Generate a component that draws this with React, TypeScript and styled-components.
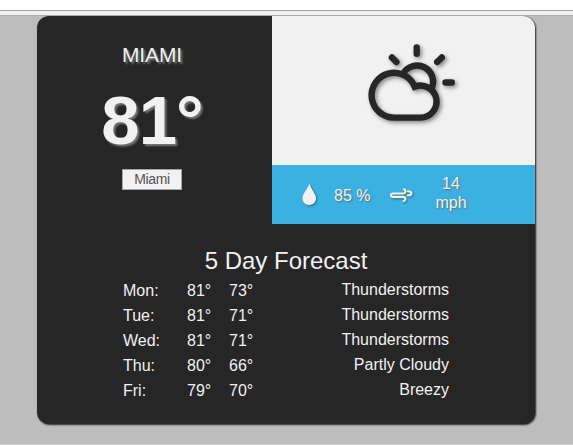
import React from "react";
import styled, { createGlobalStyle } from "styled-components";

const light = "#f1f1f1";
const dark = "#262626";

const GlobalStyle = createGlobalStyle`
  * { box-sizing: border-box; }
  html, body { margin: 0; padding: 0; }
  body {
    background: #bdbdbd;
    color: ${light};
    font-family: "Liberation Sans", Arial, sans-serif;
    font-size: 16px;
    overflow: hidden;
  }
`;

const Page = styled.div`
  height: 445px;
  border-bottom: 1px solid #d4d4d4;
`;

const TopStrip = styled.div`
  height: 11px;
  background: #fff;
  border-bottom: 1px solid #a0a0a0;
`;

const ToolStrip = styled.div`
  height: 5px;
  background: #f1f1f1;
  border-bottom: 1px solid #aeb0ae;
`;

const Card = styled.main`
  width: 498px;
  height: 408px;
  margin-left: 37px;
  background: ${dark};
  border-radius: 12px;
  box-shadow: 1px 1px 2px #262020;
`;

const Current = styled.section`
  display: grid;
  grid-template-columns: 235px 263px;
  height: 208px;
  border-radius: 12px 12px 0 0;
  overflow: hidden;
`;

const Place = styled.div`
  display: flex;
  flex-direction: column;
  align-items: center;
  padding: 27px 5px 0 0;
`;

const City = styled.h1`
  margin: 0;
  font-size: 20.8px;
  line-height: 24px;
  font-weight: 400;
  text-shadow: 2px 2px 2px #777;
`;

const Temperature = styled.div`
  margin-top: 14px;
  font-size: 69px;
  line-height: 80px;
  font-weight: 700;
  letter-spacing: -1px;
  text-shadow: 2px 2px 2px #777;
`;

const CityButton = styled.button`
  width: 60px;
  height: 21px;
  margin-top: 8px;
  padding: 0;
  border: 1px solid #a6a6a6;
  background: ${light};
  color: #555;
  font: 14px/19px "Liberation Sans", Arial, sans-serif;
  letter-spacing: -0.4px;
`;

const Conditions = styled.div`
  display: grid;
  grid-template-rows: 149px 59px;
`;

const Sky = styled.div`
  display: flex;
  padding: 24px 0 0 88px;
  background: ${light};
`;

const Stats = styled.div`
  display: grid;
  grid-template-columns: 28px 66px 24px 74px;
  align-items: center;
  padding-left: 24px;
  background: #3bb1e2;
  text-shadow: 1px 1px 2px #666;
`;

const Humidity = styled.span`
  padding: 3px 0 0 10px;
  white-space: nowrap;
`;

const WindSpeed = styled.span`
  width: 44px;
  margin-left: 15px;
  padding-bottom: 4px;
  line-height: 19px;
  text-align: center;
`;

const Icon = styled.svg`
  display: block;
  overflow: visible;
  fill: none;
  stroke-linecap: round;
`;

const SkyIcon = styled(Icon)`
  stroke: ${dark};
  stroke-width: 6.4;
  filter: drop-shadow(2px 2px 2px rgba(0, 0, 0, 0.45));
`;

const StatIcon = styled(Icon)`
  filter: drop-shadow(1px 1px 1px rgba(50, 50, 50, 0.6));
`;

const DropIcon = styled(StatIcon)`
  margin-bottom: 2px;
`;

const WindIcon = styled(StatIcon)`
  margin-left: -1px;
  stroke: ${light};
  stroke-width: 2.1;
`;

const Forecast = styled.section`
  padding-top: 22px;
`;

const Title = styled.h2`
  margin: 0 0 2px;
  font-size: 24px;
  line-height: 30px;
  font-weight: 400;
  text-align: center;
`;

const Day = styled.div`
  display: grid;
  grid-template-columns: 64px 42px 40px 1fr;
  height: 25px;
  margin: 0 86px;
  line-height: 25px;
`;

const Summary = styled.span`
  margin-top: -1px;
  text-align: right;
`;

const days = [
  ["Mon:", "81°", "73°", "Thunderstorms"],
  ["Tue:", "81°", "71°", "Thunderstorms"],
  ["Wed:", "81°", "71°", "Thunderstorms"],
  ["Thu:", "80°", "66°", "Partly Cloudy"],
  ["Fri:", "79°", "70°", "Breezy"],
];

export default function App() {
  return (
    <Page>
      <GlobalStyle />
      <TopStrip />
      <ToolStrip />
      <Card>
        <Current>
          <Place>
            <City>MIAMI</City>
            <Temperature>81°</Temperature>
            <CityButton>Miami</CityButton>
          </Place>
          <Conditions>
            <Sky>
              <SkyIcon width="100" height="85" viewBox="360 40 100 85">
                <path d="M420.2 117.6H394.4A22.4 22.4 0 1 1 414.7 86.7A16 16 0 1 1 420.2 117.6Z" />
                <path d="M402.9 74A15.9 15.9 0 0 1 431.2 89" strokeLinecap="butt" />
                <path d="M416.7 47.5V53.8M445.5 82.5H451.8M391.9 57.5L396.4 62M441.8 57.5L437.2 62" />
              </SkyIcon>
            </Sky>
            <Stats>
              <DropIcon width="28" height="24" viewBox="296 181 28 24">
                <path
                  d="M309.3 182.7C307.3 188.5 302.4 192.5 302.4 197.3C302.4 201.3 305.4 204 309.2 204C313 204 316 201.3 316 197.3C316 192.5 311.3 188.5 309.3 182.7Z"
                  fill={light}
                />
              </DropIcon>
              <Humidity>85 %</Humidity>
              <WindIcon width="24" height="16" viewBox="389 187 24 16">
                <path d="M403.8 189.2C406.3 189.4 406 193.5 403.2 193.5H393C390.3 193.5 390.3 196.9 393 196.9H403.2C406 196.9 406 201 403.4 201M408 191.2C412.6 191.2 412.2 195.2 408.8 195.2H407.7" />
              </WindIcon>
              <WindSpeed>14 mph</WindSpeed>
            </Stats>
          </Conditions>
        </Current>
        <Forecast>
          <Title>5 Day Forecast</Title>
          {days.map(([day, high, low, summary]) => (
            <Day key={day}>
              <span>{day}</span>
              <span>{high}</span>
              <span>{low}</span>
              <Summary>{summary}</Summary>
            </Day>
          ))}
        </Forecast>
      </Card>
    </Page>
  );
}
